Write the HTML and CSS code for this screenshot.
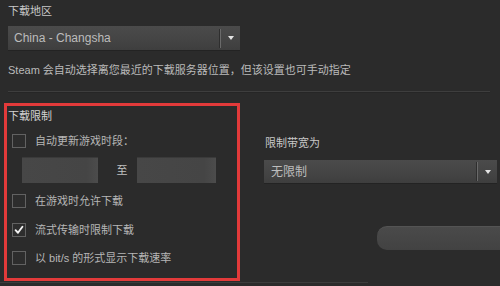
FILE: index.html
```html
<!DOCTYPE html>
<html lang="zh-CN">
<head>
<meta charset="utf-8">
<title>下载设置</title>
<link rel="stylesheet" href="styles.css">
</head>
<body>
<div class="page">
  <div class="region">
    <div class="label">下载地区</div>
    <div class="select region-select">
      <span class="select-text">China - Changsha</span>
      <span class="select-divider"></span>
      <span class="select-arrow"></span>
    </div>
    <div class="note">Steam 会自动选择离您最近的下载服务器位置，但该设置也可手动指定</div>
  </div>
  <div class="separator"></div>
  <div class="section">
    <div class="limits">
      <div class="limits-title">下载限制</div>
      <div class="check-row first">
        <span class="box"></span>
        <span class="check-label">自动更新游戏时段：</span>
      </div>
      <div class="time-row">
        <span class="time-input"></span>
        <span class="to">至</span>
        <span class="time-input"></span>
      </div>
      <div class="check-row r2">
        <span class="box"></span>
        <span class="check-label">在游戏时允许下载</span>
      </div>
      <div class="check-row r3">
        <span class="box checked"><svg viewBox="0 0 14 14" width="14" height="14"><path d="M3 7.2 L5.8 10.2 L11 3.2" fill="none" stroke="#f2f2f2" stroke-width="2.2" stroke-linecap="round" stroke-linejoin="round"/></svg></span>
        <span class="check-label">流式传输时限制下载</span>
      </div>
      <div class="check-row r4">
        <span class="box"></span>
        <span class="check-label">以 bit/s 的形式显示下载速率</span>
      </div>
    </div>
    <div class="bandwidth">
      <div class="label bw-label">限制带宽为</div>
      <div class="select bw-select">
        <span class="select-text">无限制</span>
        <span class="select-divider"></span>
        <span class="select-arrow"></span>
      </div>
      <div class="bar"></div>
    </div>
  </div>
  <div class="bottom-line"></div>
</div>
</body>
</html>
```

FILE: styles.css
```css
html, body {
  margin: 0;
  padding: 0;
  background: #2b2b2b;
}
body {
  width: 500px;
  height: 286px;
  overflow: hidden;
  font-family: "Liberation Sans", "Noto Sans CJK SC", sans-serif;
  font-size: 11px;
  line-height: 14px;
  color: #c4c4c4;
}
.page {
  display: flex;
  flex-direction: column;
}
.region {
  padding: 4px 8px 0 8px;
  display: flex;
  flex-direction: column;
}
.label {
  color: #c8c8c8;
  height: 14px;
}
.select {
  display: flex;
  align-items: center;
  box-sizing: border-box;
  background: linear-gradient(#4b4b4b, #444444 60%, #3e3e3e);
  border-bottom: 1px solid #232323;
  position: relative;
}
.region-select {
  margin-top: 8px;
  width: 232px;
  height: 25px;
}
.select-text {
  flex: 1;
  padding-left: 6px;
  color: #bdbdbd;
  font-size: 12px;
}
.region-select .select-text {
  color: #bcbcbc;
}
.select-divider {
  width: 1px;
  height: 19px;
  background: #6a6a6a;
  border-left: 1px solid #2e2e2e;
}
.select-arrow {
  width: 19px;
  height: 100%;
  display: flex;
  align-items: center;
  justify-content: center;
}
.select-arrow::after {
  content: "";
  border-left: 3.5px solid transparent;
  border-right: 3.5px solid transparent;
  border-top: 4px solid #e4e4e4;
}
.note {
  margin-top: 12px;
  color: #bababa;
}
.separator {
  margin: 14px 10px 0 8px;
  height: 1px;
  background: #3e3e3e;
  border-bottom: 1px solid #262626;
}
.section {
  display: flex;
  padding-left: 4px;
  margin-top: 10px;
}
.limits {
  width: 236px;
  box-sizing: border-box;
  border: 3px solid #e23a3a;
  padding: 3px 0 13px 1px;
  display: flex;
  flex-direction: column;
}
.limits-title {
  color: #d2d2d2;
}
.check-row {
  display: flex;
  align-items: center;
  height: 14px;
}
.check-row.first { margin-top: 11px; }
.check-row.r2 { margin-top: 11px; }
.check-row.r3 { margin-top: 15px; }
.check-row.r4 { margin-top: 14px; }
.box {
  width: 14px;
  height: 14px;
  box-sizing: border-box;
  border: 1px solid #626262;
  background: #2d2d2d;
  margin-left: 4px;
  display: flex;
  align-items: center;
  justify-content: center;
}
.box svg {
  display: block;
}
.check-label {
  margin-left: 9px;
  color: #b6b6b6;
}
.time-row {
  display: flex;
  align-items: center;
  margin-top: 9px;
  padding-left: 14px;
}
.time-input {
  width: 76px;
  height: 26px;
  box-sizing: border-box;
  background: linear-gradient(90deg, #474747, #454545 85%, #4c4c4c);
  border-top: 1px solid #3a3a3a;
}
.time-input + .to + .time-input {
  width: 79px;
}
.to {
  width: 39px;
  box-sizing: border-box;
  padding-left: 9px;
  text-align: center;
  color: #c0c0c0;
}
.bandwidth {
  margin-left: 24px;
  width: 236px;
  display: flex;
  flex-direction: column;
}
.bw-label {
  margin-top: 33px;
  padding-left: 1px;
}
.bw-select {
  margin-top: 10px;
  width: 233px;
  height: 24px;
}
.bw-select .select-text {
  padding-left: 7px;
}
.bar {
  margin-top: 42px;
  margin-left: 113px;
  width: 123px;
  height: 24px;
  border-radius: 10px 0 0 10px;
  background: linear-gradient(#4a4a4a, #464646 50%, #424242);
  border-top: 1px solid #545454;
  box-sizing: border-box;
}
.bottom-line {
  margin-top: 1px;
  height: 1px;
  width: 368px;
  background: #3c3c3c;
}
```
